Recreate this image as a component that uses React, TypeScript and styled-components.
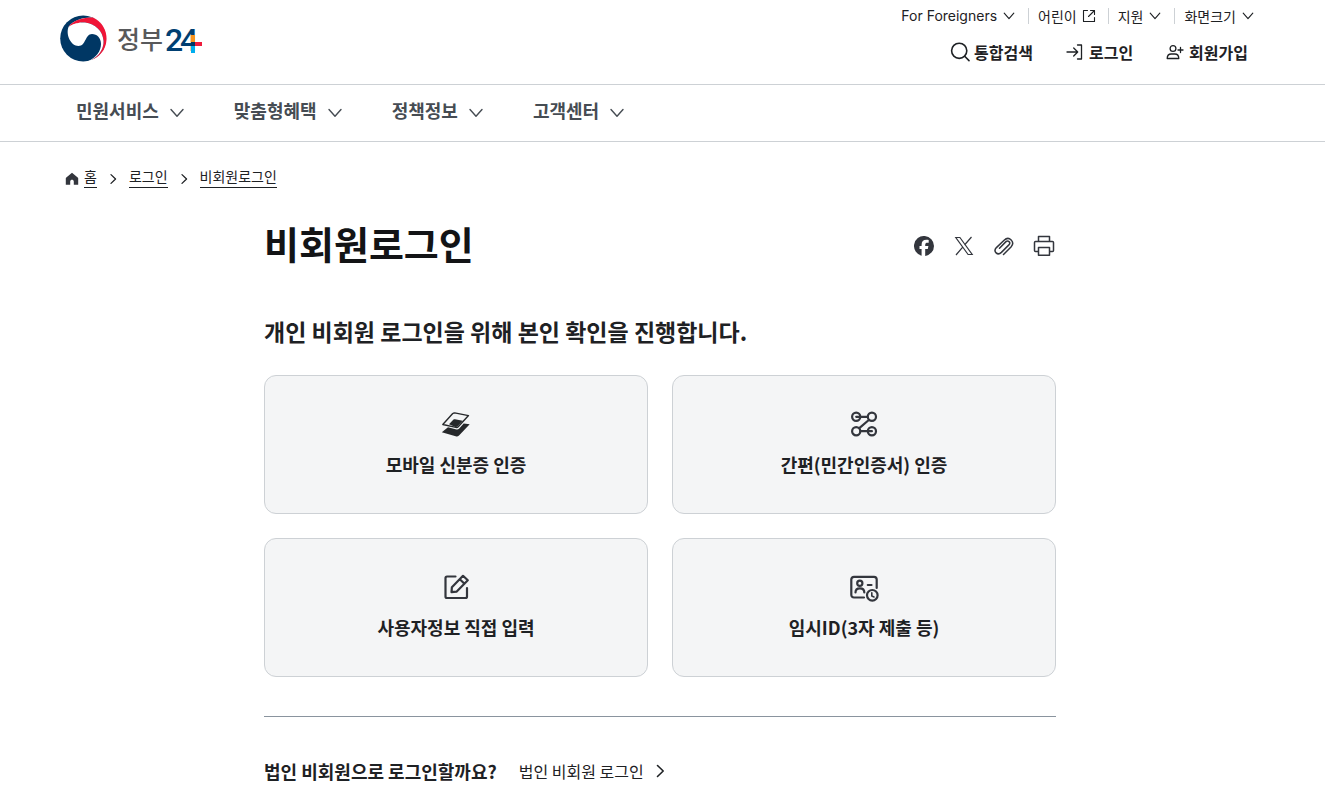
import React from 'react';
import styled, { createGlobalStyle } from 'styled-components';

const GlobalStyle = createGlobalStyle`
  *, *::before, *::after { box-sizing: border-box; }
  body {
    margin: 0;
    background: #fff;
    color: #1e2124;
    font-family: "Noto Sans CJK KR", "Inter", sans-serif;
    font-size: 16px;
    line-height: 24px;
  }
  h1, h2, p, ul, ol { margin: 0; padding: 0; }
  ul, ol { list-style: none; }
  a { color: inherit; text-decoration: none; }
  button { border: 0; padding: 0; background: none; color: inherit; font: inherit; cursor: pointer; }
  svg { display: block; flex: none; }
`;

const TopBar = styled.div`
  display: flex;
  justify-content: space-between;
  align-items: flex-start;
  height: 84px;
  padding: 4px 69px 0 60px;
`;

const LogoLink = styled.a`
  display: block;
  padding-top: 10px;
`;

const Tools = styled.div`
  display: flex;
  flex-direction: column;
  align-items: flex-end;
  gap: 12px;
`;

const UtilityList = styled.ul`
  display: flex;
  align-items: center;
`;

const UtilityItem = styled.li`
  display: flex;
  align-items: center;
  & + &::before {
    content: "";
    width: 1px;
    height: 16px;
    margin: 0 9px 0 11px;
    background: #cdd1d5;
  }
`;

const UtilityButton = styled.button<{ $latin?: boolean }>`
  display: flex;
  align-items: center;
  gap: 4px;
  font-family: ${p => (p.$latin ? '"Inter", sans-serif' : 'inherit')};
  font-size: 14px;
  line-height: 24px;
`;

const UtilityLink = styled(UtilityButton).attrs({ as: 'a' })<{ href?: string }>``;

const ActionList = styled.ul`
  display: flex;
  gap: 32px;
  padding-right: 8px;
`;

const ActionButton = styled.button`
  display: flex;
  align-items: center;
  gap: 4px;
  font-size: 16px;
  font-weight: 700;
  line-height: 24px;
`;

const MainNav = styled.nav`
  border-top: 1px solid #cdd1d5;
  border-bottom: 1px solid #cdd1d5;
  padding: 0 76px;
`;

const NavList = styled.ul`
  display: flex;
  gap: 47px;
`;

const NavButton = styled.button`
  display: flex;
  align-items: center;
  gap: 8px;
  height: 56px;
  padding-bottom: 6px;
  color: #464c53;
  font-size: 18px;
  font-weight: 700;
  svg { margin-top: 5px; }
`;

const Breadcrumb = styled.ol`
  display: flex;
  align-items: center;
  gap: 8px;
  padding: 24px 64px 0;
  font-size: 14px;
  line-height: 20px;
`;

const Crumb = styled.li`
  display: flex;
  align-items: center;
  gap: 8px;
  svg { margin-top: 4px; }
`;

const CrumbLink = styled.a`
  border-bottom: 1px solid #1e2124;
  line-height: 21px;
`;

const HomeMark = styled.span`
  margin-right: -4px;
`;

const Content = styled.main`
  max-width: 797px;
  margin: 0 auto;
  padding: 25px 5px 24px 0;
`;

const TitleRow = styled.div`
  display: flex;
  justify-content: space-between;
  align-items: center;
`;

const Title = styled.h1`
  color: #131416;
  font-size: 38px;
  font-weight: 700;
  line-height: 60px;
`;

const ShareList = styled.ul`
  display: flex;
  gap: 16px;
  padding-top: 5px;
`;

const IconButton = styled.button`
  display: flex;
  align-items: center;
  justify-content: center;
  width: 24px;
  height: 24px;
  color: #33363d;
`;

const Lead = styled.h2`
  margin-top: 40px;
  font-size: 23px;
  font-weight: 700;
  line-height: 36px;
`;

const CardGrid = styled.div`
  display: grid;
  grid-template-columns: repeat(2, 1fr);
  gap: 24px;
  margin-top: 26px;
`;

const Card = styled.button`
  display: flex;
  flex-direction: column;
  align-items: center;
  gap: 10px;
  padding: 32px 16px 35px;
  border: 1px solid #cdd1d5;
  border-radius: 12px;
  background: #f4f5f6;
  font-size: 18px;
  font-weight: 700;
  line-height: 28px;
`;

const Divider = styled.hr`
  height: 1px;
  margin: 39px 0 40px;
  border: 0;
  background: #8a949e;
`;

const CorporateRow = styled.div`
  display: flex;
  align-items: center;
  gap: 22px;
  line-height: 28px;
`;

const Question = styled.strong`
  font-size: 18px;
  font-weight: 700;
`;

const CorporateLink = styled.a`
  display: flex;
  align-items: center;
  gap: 6px;
  font-size: 16px;
`;

const stroke = {
  fill: 'none',
  stroke: 'currentColor',
  strokeLinecap: 'round' as const,
  strokeLinejoin: 'round' as const,
};

const ChevronDown = ({ size }: { size: number }) => (
  <svg width={size} height={size} viewBox="0 0 20 20" {...stroke} strokeWidth="1.4" aria-hidden="true">
    <path d="M4 6.500 10 13.300l6-6.800" />
  </svg>
);

const ChevronRight = ({ size, weight }: { size: number; weight: number }) => (
  <svg width={size} height={size} viewBox="0 0 20 20" {...stroke} strokeWidth={weight} aria-hidden="true">
    <path d="m7.5 4.5 5.7 5.5-5.7 5.5" />
  </svg>
);

const Logo = () => (
  <svg width="146" height="50" viewBox="0 0 146 50" role="img" aria-label="정부24">
    <circle cx="23.200" cy="24.500" r="23" fill="#003764" />
    <path d="M8.500 13C13 6.500 23 3.200 33 3.600A23 23 0 0 1 31 46.300L26 48 46 49V24L33 3.600Z" fill="#fff" />
    <path d="M8.500 13C13 6.500 23 3 33 3.600A23 23 0 0 1 31 46.300C39 42 43.800 35 43.500 27 43 17 35 9.500 25 8.500 17 8 11.500 11 8.500 13Z" fill="#f01537" />
    <path d="M8.500 13C11.500 11 17 8 25 8.500 35 9.500 43 17 43.500 27 43.800 35 39 42 31 46.300L28.500 47C36.500 43 41 37 41 30 41 24 37 20 32 20 25 20 26 32 18.500 32 11 32 5.500 21 8.500 13Z" fill="#fff" />
    <text x="57" y="35" fontSize="25" fontWeight="500" fill="#58595b" fontFamily='"Noto Sans CJK KR", sans-serif'>정부</text>
    <text x="105 120" y="37" fontSize="32" fontWeight="500" fill="#003f72" fontFamily="Roboto, sans-serif">24</text>
    <rect x="131" y="21" width="4" height="7" fill="#f7941e" />
    <rect x="131" y="28" width="4" height="4" fill="#003764" />
    <rect x="135" y="28" width="7" height="4" fill="#ee1c3c" />
    <rect x="131" y="32" width="4" height="7" fill="#00aeef" />
  </svg>
);

const ExternalIcon = () => (
  <svg width="16" height="16" viewBox="0 0 16 16" {...stroke} strokeWidth="1.1" aria-hidden="true">
    <path d="M6.500 2.500H2.500v11h11V9.500M9.500 2.500h4v4M13.500 2.500 7.500 8.500" />
  </svg>
);

const SearchIcon = () => (
  <svg width="20" height="20" viewBox="0 0 20 20" {...stroke} strokeWidth="1.600" aria-hidden="true">
    <circle cx="9.200" cy="8.800" r="7.600" />
    <path d="m14.700 14.300 4.300 4.300" />
  </svg>
);

const LoginIcon = () => (
  <svg width="20" height="20" viewBox="0 0 20 20" {...stroke} strokeWidth="1.300" aria-hidden="true">
    <path d="M12.500 3H16.500v14h-4M2 10H12.500M8.700 6l4 4-4 4" />
  </svg>
);

const JoinIcon = () => (
  <svg width="20" height="20" viewBox="0 0 20 20" {...stroke} strokeWidth="1.300" aria-hidden="true">
    <circle cx="8" cy="6.500" r="2.900" />
    <path d="M2.200 16.500c0-3 1.800-4.500 4-4.500h3.600c2.200 0 4 1.500 4 4.500ZM15.500 5.500v5M13 8h5" />
  </svg>
);

const HomeIcon = () => (
  <svg width="16" height="16" viewBox="0 0 16 16" fill="#33363d" aria-hidden="true">
    <path d="M8 1.800 2.300 6.400c-.4.300-.5.700-.5 1.100v6.200h4.400V10.500c0-2.300 3.600-2.300 3.600 0v3.200h4.400V7.500c0-.4-.1-.8-.5-1.100Z" />
  </svg>
);

const FacebookIcon = () => (
  <svg width="20" height="20" viewBox="0 0 20 20" fill="currentColor" aria-hidden="true">
    <path d="M20 10a10 10 0 1 0-12.400 9.700v-6.600H5.500V10h2.100V8.700c0-3.400 1.500-5 4.900-5 .6 0 1.700.1 2.200.300v2.800h-1.200c-1.600 0-2.300.6-2.300 2.300V10h3.200l-.6 3.100h-2.600v6.800A10 10 0 0 0 20 10Z" />
  </svg>
);

const XIcon = () => (
  <svg width="20" height="20" viewBox="0 0 20 20" fill="none" stroke="currentColor" strokeWidth="1.200" aria-hidden="true">
    <path d="M1.800 1.500h4.100l12.300 17h-4.100ZM17.500 1l-7 8M8.700 11.200 2 19" />
  </svg>
);

const ClipIcon = () => (
  <svg width="22" height="22" viewBox="0 0 22 22" {...stroke} strokeWidth="1.500" aria-hidden="true">
    <path d="m10.500 19.500 7.500-7.500c4.500-5-1.800-11.500-6.900-6.800L3.400 12.600c-3.600 4 1.200 8.400 5 4.800l7.500-7.500c2.300-2.500-.8-5.300-3.200-3L6.500 13.200" />
  </svg>
);

const PrintIcon = () => (
  <svg width="22" height="22" viewBox="0 0 22 22" {...stroke} strokeWidth="1.500" aria-hidden="true">
    <path d="M5.500 6.500V1.500h11v5M5.500 16.500H2.500c-.7 0-1-.3-1-1v-8c0-.7.3-1 1-1h17c.7 0 1 .3 1 1v8c0 .7-.3 1-1 1h-3M5.500 12.500h11v7.800h-11Z" />
  </svg>
);

const MobileIdIcon = () => (
  <svg width="32" height="32" viewBox="0 0 32 32" aria-hidden="true">
    <path d="M2.800 16.500 12.500 5.800c.7-.7 1.300-.9 2.200-.9l13.800 2.700-10.300 11.100c-.7.8-1.400.9-2.300.7Z" fill="none" stroke="#26282b" strokeWidth="1.400" strokeLinejoin="round" />
    <path d="m9 16.300 4.300-4.600c.5-.5 1-.6 1.700-.5l7.700 1.600-5 5.400c-.8.800-1.500.9-2.300.7Z" fill="#26282b" />
    <path d="M1.800 24.300 8 19.300l8.500 2.200c1 .2 1.800 0 2.500-.7l4.700-5.300 6 .8-10.200 10.700c-.9 1-1.700 1.700-3 1.400Z" fill="#26282b" />
  </svg>
);

const SimpleAuthIcon = () => (
  <svg width="32" height="32" viewBox="0 0 32 32" {...stroke} stroke="#33363d" strokeWidth="2.200" aria-hidden="true">
    <circle cx="8.200" cy="8.800" r="4.100" />
    <circle cx="23.900" cy="8.800" r="4.100" />
    <circle cx="8.200" cy="23.200" r="4.100" />
    <circle cx="23.900" cy="23.200" r="4.100" />
    <path d="M8.200 8.800h11.500M12.500 23.200H23.900M20.800 12 11.300 20.200" />
  </svg>
);

const EditIcon = () => (
  <svg width="32" height="32" viewBox="0 0 32 32" {...stroke} stroke="#33363d" strokeWidth="2.200" aria-hidden="true">
    <path d="M15.500 5.500H7c-1 0-1.500.5-1.500 1.500v18.500c0 1 .5 1.500 1.500 1.500h18.500c1 0 1.500-.5 1.500-1.500V17" />
    <path d="m11.500 21.200.4-5L23 4.800l4.800 4.500-11.300 11.400ZM19.800 8.200l4.700 4.500" />
  </svg>
);

const TempIdIcon = () => (
  <svg width="32" height="32" viewBox="0 0 32 32" {...stroke} stroke="#33363d" strokeWidth="2.200" aria-hidden="true">
    <path d="M16 26.500H6c-1.700 0-2.700-1-2.700-2.700V8.500c0-1.700 1-2.700 2.700-2.700h20c1.700 0 2.700 1 2.700 2.700V17" />
    <circle cx="11.800" cy="12.300" r="2.600" />
    <path d="M7.500 21.500c0-3 1.700-4.200 4.400-4.200s4.400 1.200 4.400 4.200M19.800 14h3.700" />
    <circle cx="24.300" cy="24.300" r="5.300" />
    <path d="M23.800 21.800V25l2.200 1" strokeWidth="1.600" />
  </svg>
);

const navItems = ['민원서비스', '맞춤형혜택', '정책정보', '고객센터'];

const authMethods = [
  { label: '모바일 신분증 인증', Icon: MobileIdIcon },
  { label: '간편(민간인증서) 인증', Icon: SimpleAuthIcon },
  { label: '사용자정보 직접 입력', Icon: EditIcon },
  { label: '임시ID(3자 제출 등)', Icon: TempIdIcon },
];

const shareActions = [
  { label: '페이스북 공유', Icon: FacebookIcon },
  { label: 'X 공유', Icon: XIcon },
  { label: '주소 복사', Icon: ClipIcon },
  { label: '인쇄', Icon: PrintIcon },
];

const actions = [
  { label: '통합검색', Icon: SearchIcon },
  { label: '로그인', Icon: LoginIcon },
  { label: '회원가입', Icon: JoinIcon },
];

export default function App() {
  return (
    <>
      <GlobalStyle />
      <header>
        <TopBar>
          <LogoLink href="#"><Logo /></LogoLink>
          <Tools>
            <UtilityList>
              <UtilityItem>
                <UtilityButton $latin>For Foreigners<ChevronDown size={16} /></UtilityButton>
              </UtilityItem>
              <UtilityItem>
                <UtilityLink href="#">어린이<ExternalIcon /></UtilityLink>
              </UtilityItem>
              <UtilityItem>
                <UtilityButton>지원<ChevronDown size={16} /></UtilityButton>
              </UtilityItem>
              <UtilityItem>
                <UtilityButton>화면크기<ChevronDown size={16} /></UtilityButton>
              </UtilityItem>
            </UtilityList>
            <ActionList>
              {actions.map(({ label, Icon }) => (
                <li key={label}><ActionButton><Icon />{label}</ActionButton></li>
              ))}
            </ActionList>
          </Tools>
        </TopBar>
        <MainNav>
          <NavList>
            {navItems.map(label => (
              <li key={label}><NavButton>{label}<ChevronDown size={20} /></NavButton></li>
            ))}
          </NavList>
        </MainNav>
      </header>
      <nav>
        <Breadcrumb>
          <Crumb>
            <HomeMark><HomeIcon /></HomeMark>
            <CrumbLink href="#">홈</CrumbLink>
          </Crumb>
          <Crumb><ChevronRight size={16} weight={1.6} /><CrumbLink href="#">로그인</CrumbLink></Crumb>
          <Crumb><ChevronRight size={16} weight={1.6} /><CrumbLink href="#">비회원로그인</CrumbLink></Crumb>
        </Breadcrumb>
      </nav>
      <Content>
        <TitleRow>
          <Title>비회원로그인</Title>
          <ShareList>
            {shareActions.map(({ label, Icon }) => (
              <li key={label}><IconButton aria-label={label}><Icon /></IconButton></li>
            ))}
          </ShareList>
        </TitleRow>
        <Lead>개인 비회원 로그인을 위해 본인 확인을 진행합니다.</Lead>
        <CardGrid>
          {authMethods.map(({ label, Icon }) => (
            <Card key={label}><Icon />{label}</Card>
          ))}
        </CardGrid>
        <Divider />
        <CorporateRow>
          <Question>법인 비회원으로 로그인할까요?</Question>
          <CorporateLink href="#">법인 비회원 로그인<ChevronRight size={20} weight={1.6} /></CorporateLink>
        </CorporateRow>
      </Content>
    </>
  );
}
